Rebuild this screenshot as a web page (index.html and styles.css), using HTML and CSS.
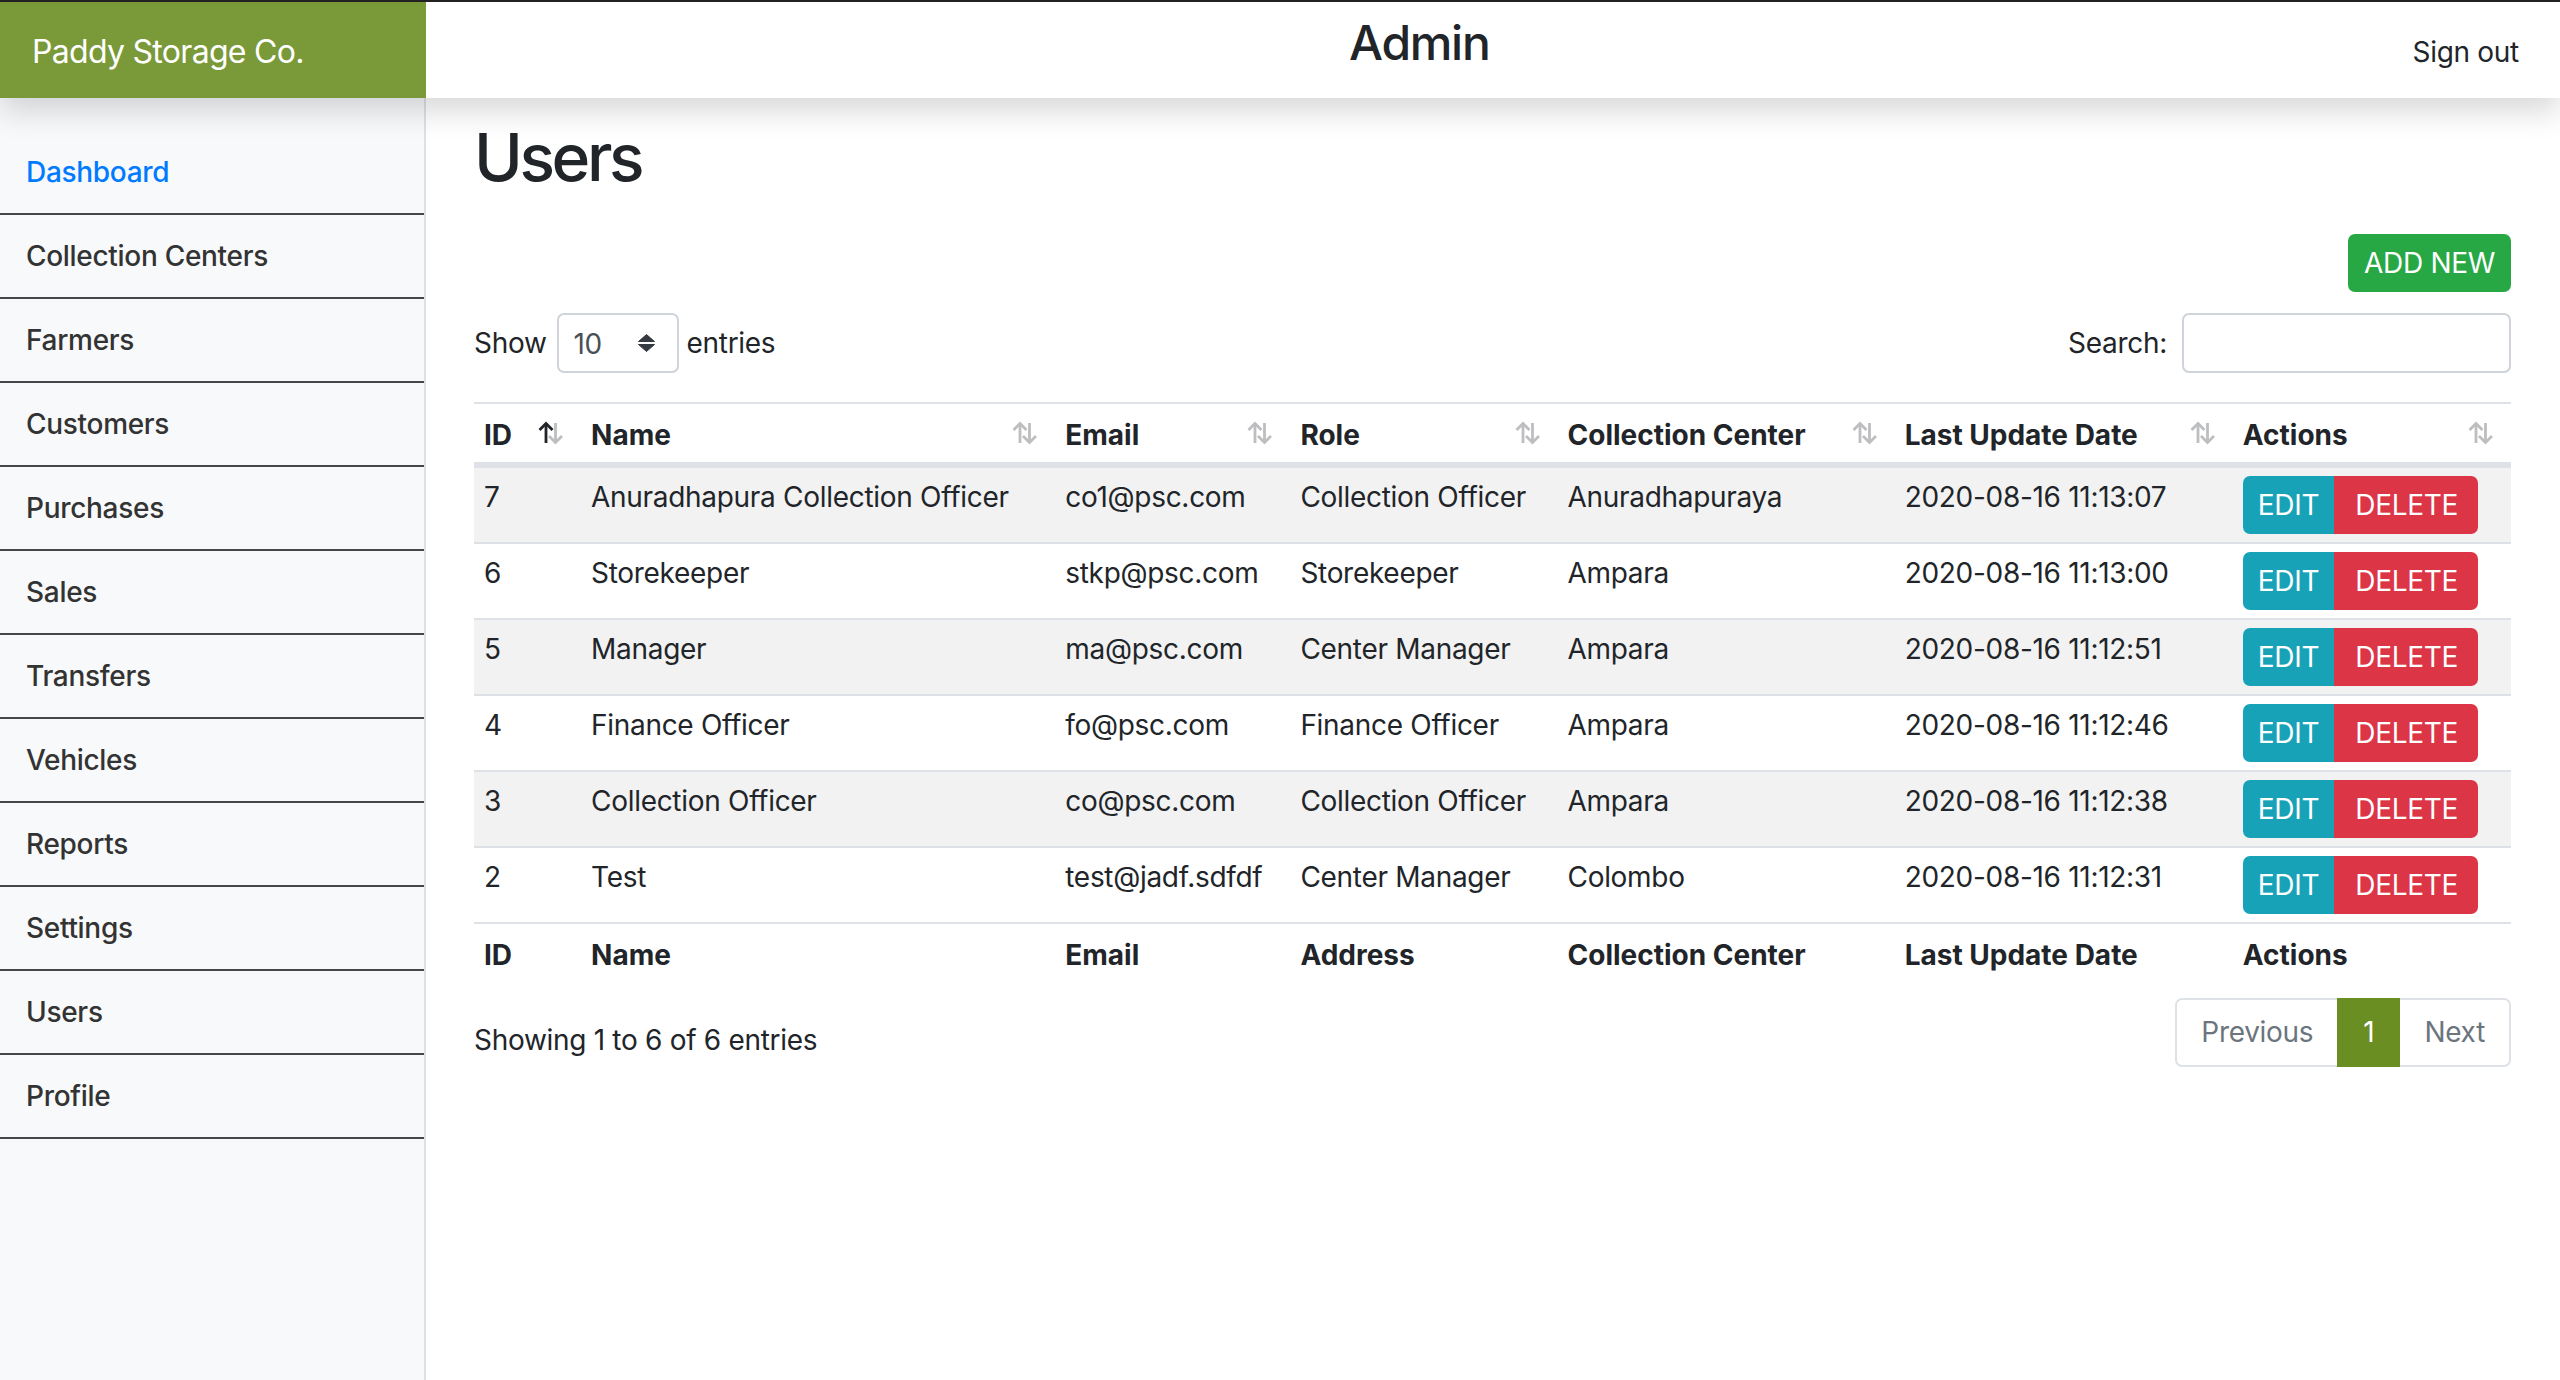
FILE: index.html
```html
<!DOCTYPE html>
<html lang="en">
<head>
<meta charset="utf-8">
<title>Users - Paddy Storage Co.</title>
<link rel="stylesheet" href="styles.css">
</head>
<body>
<header class="topbar">
  <a class="brand">Paddy Storage Co.</a>
  <h3 class="page-role">Admin</h3>
  <a class="signout">Sign out</a>
</header>
<div class="layout">
  <nav class="sidebar">
    <ul class="side-nav">
      <li><a class="side-link active">Dashboard</a></li>
      <li><a class="side-link">Collection Centers</a></li>
      <li><a class="side-link">Farmers</a></li>
      <li><a class="side-link">Customers</a></li>
      <li><a class="side-link">Purchases</a></li>
      <li><a class="side-link">Sales</a></li>
      <li><a class="side-link">Transfers</a></li>
      <li><a class="side-link">Vehicles</a></li>
      <li><a class="side-link">Reports</a></li>
      <li><a class="side-link">Settings</a></li>
      <li><a class="side-link">Users</a></li>
      <li><a class="side-link">Profile</a></li>
    </ul>
  </nav>
  <main class="main">
    <h1 class="title">Users</h1>
    <div class="add-row"><button class="btn btn-success">ADD NEW</button></div>
    <div class="dt-top">
      <div class="dt-length">
        <span>Show</span>
        <span class="select"><span class="select-val">10</span>
          <svg class="select-arrows" width="17" height="18" viewBox="0 0 17 18"><path d="M8.5 0.5 L16.5 7.5 L0.5 7.5 Z" fill="#343a40" stroke="#343a40" stroke-linejoin="round"/><path d="M0.5 10.5 L16.5 10.5 L8.5 17.5 Z" fill="#343a40" stroke="#343a40" stroke-linejoin="round"/></svg>
        </span>
        <span>entries</span>
      </div>
      <div class="dt-search">
        <span>Search:</span>
        <input class="search-input" type="search" aria-label="Search">
      </div>
    </div>
    <table class="table">
      <colgroup>
        <col class="c-id"><col class="c-name"><col class="c-email"><col class="c-role"><col class="c-center"><col class="c-date"><col class="c-actions">
      </colgroup>
      <thead>
        <tr>
          <th class="sort-asc"><div class="th-in"><span>ID</span><svg class="sort" width="28" height="24" viewBox="0 0 28 24"><g class="dn"><path d="M18.5 2 V21.5"/><path d="M12 15 L18.5 21.5 L25 15"/></g><g class="up"><path d="M9 22 V2.5"/><path d="M2.5 9 L9 2.5 L15.5 9"/></g></svg></div></th>
          <th><div class="th-in"><span>Name</span><svg class="sort" width="28" height="24" viewBox="0 0 28 24"><g class="dn"><path d="M18.5 2 V21.5"/><path d="M12 15 L18.5 21.5 L25 15"/></g><g class="up"><path d="M9 22 V2.5"/><path d="M2.5 9 L9 2.5 L15.5 9"/></g></svg></div></th>
          <th><div class="th-in"><span>Email</span><svg class="sort" width="28" height="24" viewBox="0 0 28 24"><g class="dn"><path d="M18.5 2 V21.5"/><path d="M12 15 L18.5 21.5 L25 15"/></g><g class="up"><path d="M9 22 V2.5"/><path d="M2.5 9 L9 2.5 L15.5 9"/></g></svg></div></th>
          <th><div class="th-in"><span>Role</span><svg class="sort" width="28" height="24" viewBox="0 0 28 24"><g class="dn"><path d="M18.5 2 V21.5"/><path d="M12 15 L18.5 21.5 L25 15"/></g><g class="up"><path d="M9 22 V2.5"/><path d="M2.5 9 L9 2.5 L15.5 9"/></g></svg></div></th>
          <th><div class="th-in"><span>Collection Center</span><svg class="sort" width="28" height="24" viewBox="0 0 28 24"><g class="dn"><path d="M18.5 2 V21.5"/><path d="M12 15 L18.5 21.5 L25 15"/></g><g class="up"><path d="M9 22 V2.5"/><path d="M2.5 9 L9 2.5 L15.5 9"/></g></svg></div></th>
          <th><div class="th-in"><span>Last Update Date</span><svg class="sort" width="28" height="24" viewBox="0 0 28 24"><g class="dn"><path d="M18.5 2 V21.5"/><path d="M12 15 L18.5 21.5 L25 15"/></g><g class="up"><path d="M9 22 V2.5"/><path d="M2.5 9 L9 2.5 L15.5 9"/></g></svg></div></th>
          <th><div class="th-in"><span>Actions</span><svg class="sort" width="28" height="24" viewBox="0 0 28 24"><g class="dn"><path d="M18.5 2 V21.5"/><path d="M12 15 L18.5 21.5 L25 15"/></g><g class="up"><path d="M9 22 V2.5"/><path d="M2.5 9 L9 2.5 L15.5 9"/></g></svg></div></th>
        </tr>
      </thead>
      <tbody>
        <tr>
          <td>7</td><td>Anuradhapura Collection Officer</td><td>co1@psc.com</td><td>Collection Officer</td><td>Anuradhapuraya</td><td>2020-08-16 11:13:07</td>
          <td><div class="btn-group"><button class="btn btn-info">EDIT</button><button class="btn btn-danger">DELETE</button></div></td>
        </tr>
        <tr>
          <td>6</td><td>Storekeeper</td><td>stkp@psc.com</td><td>Storekeeper</td><td>Ampara</td><td>2020-08-16 11:13:00</td>
          <td><div class="btn-group"><button class="btn btn-info">EDIT</button><button class="btn btn-danger">DELETE</button></div></td>
        </tr>
        <tr>
          <td>5</td><td>Manager</td><td>ma@psc.com</td><td>Center Manager</td><td>Ampara</td><td>2020-08-16 11:12:51</td>
          <td><div class="btn-group"><button class="btn btn-info">EDIT</button><button class="btn btn-danger">DELETE</button></div></td>
        </tr>
        <tr>
          <td>4</td><td>Finance Officer</td><td>fo@psc.com</td><td>Finance Officer</td><td>Ampara</td><td>2020-08-16 11:12:46</td>
          <td><div class="btn-group"><button class="btn btn-info">EDIT</button><button class="btn btn-danger">DELETE</button></div></td>
        </tr>
        <tr>
          <td>3</td><td>Collection Officer</td><td>co@psc.com</td><td>Collection Officer</td><td>Ampara</td><td>2020-08-16 11:12:38</td>
          <td><div class="btn-group"><button class="btn btn-info">EDIT</button><button class="btn btn-danger">DELETE</button></div></td>
        </tr>
        <tr>
          <td>2</td><td>Test</td><td>test@jadf.sdfdf</td><td>Center Manager</td><td>Colombo</td><td>2020-08-16 11:12:31</td>
          <td><div class="btn-group"><button class="btn btn-info">EDIT</button><button class="btn btn-danger">DELETE</button></div></td>
        </tr>
      </tbody>
      <tfoot>
        <tr>
          <th>ID</th><th>Name</th><th>Email</th><th>Address</th><th>Collection Center</th><th>Last Update Date</th><th>Actions</th>
        </tr>
      </tfoot>
    </table>
    <div class="dt-bottom">
      <div class="dt-info">Showing 1 to 6 of 6 entries</div>
      <ul class="pagination">
        <li class="page-item disabled"><a class="page-link">Previous</a></li>
        <li class="page-item active"><a class="page-link">1</a></li>
        <li class="page-item disabled"><a class="page-link">Next</a></li>
      </ul>
    </div>
  </main>
</div>
</body>
</html>
```
FILE: styles.css
```css
* { box-sizing: border-box; }
html, body { margin: 0; padding: 0; }
body {
  font-family: Inter, "Liberation Sans", sans-serif;
  font-size: 28px;
  line-height: 42px;
  letter-spacing: -0.3px;
  color: #212529;
  background: #fff;
}
a { text-decoration: none; }

/* top bar */
.topbar {
  position: relative;
  z-index: 2;
  display: flex;
  justify-content: space-between;
  align-items: center;
  height: 98px;
  border-top: 2px solid #222;
  background: #fff;
  box-shadow: 0 14px 28px rgba(0, 0, 0, .15);
}
.brand {
  align-self: stretch;
  width: 426px;
  display: flex;
  align-items: center;
  padding-left: 32px;
  padding-top: 4px;
  background: rgb(122, 153, 57);
  color: #fff;
  font-size: 32px;
  letter-spacing: -0.7px;
}
.page-role {
  margin: 0 0 14px;
  font-size: 48px;
  font-weight: 500;
  line-height: 58px;
  letter-spacing: -1.3px;
}
.signout {
  padding: 4px 41px 0 0;
  color: #212529;
}

/* layout */
.layout { display: flex; min-height: 1282px; }
.sidebar {
  width: 426px;
  flex: none;
  background: #f8f9fa;
  border-right: 2px solid #dfe0e1;
  padding-top: 33px;
}
.side-nav { list-style: none; margin: 0; padding: 0; }
.side-link {
  display: block;
  padding: 20px 26px;
  border-bottom: 2px solid #474747;
  font-weight: 500;
  color: #333;
}
.side-link.active { color: #007bff; }

.main {
  flex: 1;
  min-width: 0;
  padding: 17px 49px 0 48px;
}
.title {
  margin: 0;
  font-size: 66px;
  font-weight: 500;
  line-height: 84px;
  letter-spacing: -3.4px;
}

/* buttons */
.btn {
  display: inline-block;
  height: 58px;
  padding: 0 15px;
  border: 0;
  font-family: inherit;
  font-size: 28px;
  line-height: 58px;
  letter-spacing: -0.3px;
  color: #fff;
  border-radius: 7px;
  cursor: pointer;
}
.btn-success { background: #28a745; padding: 0 16px; }
.btn-info { background: #17a2b8; }
.btn-danger { background: #dc3545; padding: 0 20px 0 21px; }
.add-row { display: flex; justify-content: flex-end; margin-top: 35px; }
.btn-group { display: inline-flex; vertical-align: top; }
.btn-group .btn-info { border-radius: 7px 0 0 7px; }
.btn-group .btn-danger { border-radius: 0 7px 7px 0; }

/* datatable controls */
.dt-top {
  display: flex;
  justify-content: space-between;
  align-items: center;
  margin-top: 21px;
  height: 60px;
}
.dt-length, .dt-search { display: flex; align-items: center; }
.dt-length .select {
  display: inline-flex;
  align-items: center;
  justify-content: space-between;
  width: 122px;
  height: 60px;
  margin: 0 8px 0 10px;
  padding: 2px 22px 0 15px;
  border: 2px solid #ced4da;
  border-radius: 7px;
  color: #495057;
  background: #fff;
}
.select-arrows { display: block; margin-top: -2px; }
.search-input {
  width: 329px;
  height: 60px;
  margin-left: 15px;
  padding: 0 14px;
  border: 2px solid #ced4da;
  border-radius: 7px;
  font: inherit;
  outline: none;
  background: #fff;
}

/* table */
.table {
  width: 100%;
  margin-top: 29px;
  border-collapse: separate;
  border-spacing: 0;
  table-layout: fixed;
}
.c-id { width: 107px; }
.c-name { width: 474px; }
.c-email { width: 235px; }
.c-role { width: 267px; }
.c-center { width: 337px; }
.c-date { width: 338px; }
.c-actions { width: 278px; }
.table th { text-align: left; font-weight: 700; white-space: nowrap; letter-spacing: 0; }
.table thead th {
  padding: 10px 16px 6px 10px;
  border-top: 2px solid #dee2e6;
  border-bottom: 4px solid #dee2e6;
}
.th-in { display: flex; justify-content: space-between; align-items: center; }
.sort { display: block; flex: none; margin-top: -4px; }
.sort g { fill: none; stroke: #bdbebf; stroke-width: 2.8; stroke-linecap: butt; stroke-linejoin: miter; }
.sort-asc .sort .up { stroke: #212529; }
.table td {
  padding: 8px 10px;
  border-top: 2px solid #dee2e6;
  vertical-align: top;
  white-space: nowrap;
}
.table tbody tr:nth-child(odd) { background: #f2f2f2; }
.table tfoot th {
  padding: 10px;
  border-top: 2px solid #dee2e6;
}

/* bottom */
.dt-bottom {
  display: flex;
  justify-content: space-between;
  align-items: flex-start;
  margin-top: 12px;
}
.dt-info { padding-top: 21px; }
.pagination { display: flex; list-style: none; margin: 0; padding: 0; }
.page-link {
  display: block;
  padding: 15px 24px;
  line-height: 35px;
  border: 2px solid #dee2e6;
  color: #6c757d;
  background: #fff;
}
.page-item + .page-item .page-link { margin-left: -2px; }
.page-item:first-child .page-link { border-radius: 7px 0 0 7px; }
.page-item:last-child .page-link { border-radius: 0 7px 7px 0; }
.page-item.active .page-link {
  position: relative;
  background: #6b8e23;
  border-color: #6b8e23;
  color: #fff;
}
```
